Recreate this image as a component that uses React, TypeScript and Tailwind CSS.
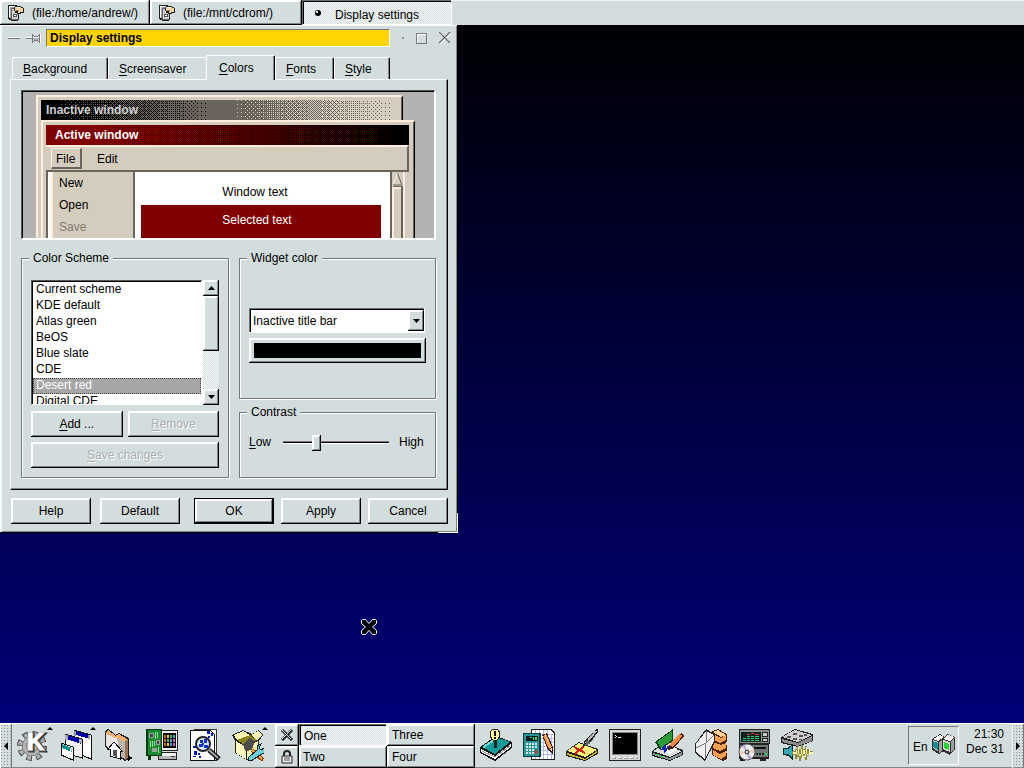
import React, { useState } from "react";
import clsx from "clsx";

const raised =
  "bg-[#d4dddd] shadow-[inset_-1px_-1px_0_#000,inset_1px_1px_0_#fff,inset_-2px_-2px_0_#808686,inset_2px_2px_0_#fff]";
const sunken =
  "shadow-[inset_-1px_-1px_0_#fff,inset_1px_1px_0_#6b7070,inset_2px_2px_0_#000]";
const dither =
  "bg-[repeating-conic-gradient(#f8fbfb_0_25%,#d4dddd_0_50%)] bg-[length:2px_2px]";

const schemes = [
  "Current scheme",
  "KDE default",
  "Atlas green",
  "BeOS",
  "Blue slate",
  "CDE",
  "Desert red",
  "Digital CDE",
];

const tabs = [
  { name: "Background", width: "w-[96px]" },
  { name: "Screensaver", width: "w-[98px]" },
  { name: "Colors", width: "w-[69px]" },
  { name: "Fonts", width: "w-[59px]" },
  { name: "Style", width: "w-[56px]" },
];

// 4x4 ordered dither thresholds
const bayer = [
  [0, 8, 2, 10],
  [12, 4, 14, 6],
  [3, 11, 1, 9],
  [15, 7, 13, 5],
];

const ditherPath = (from: number, to: number, end: number) => {
  let d = "";
  for (let y = 0; y < 20; y++) {
    for (let x = from; x < to; x++) {
      const level = (x - from) / (to - from);
      if (level * 16 > bayer[y % 4][x % 4] + 0.5) {
        d += `M${x} ${y}h1v1h-1z`;
      }
    }
  }
  return `${d}M${to} 0H${end}V20H${to}z`;
};

const inactiveDither = [ditherPath(15, 170, 363), ditherPath(190, 355, 363)];
const activeDither = [ditherPath(50, 220, 363), ditherPath(220, 355, 363)];

interface DitherProps {
  paths: string[];
  base: string;
  colors: string[];
}

const DitherBar: React.FC<DitherProps> = ({ paths, base, colors }) => (
  <svg
    viewBox="0 0 363 20"
    preserveAspectRatio="xMinYMin slice"
    className="absolute inset-0 h-5 w-full"
    shapeRendering="crispEdges"
    aria-hidden="true"
  >
    <path d="M0 0h363v20H0z" fill={base} />
    {paths.map((d, i) => (
      <path key={colors[i]} d={d} fill={colors[i]} />
    ))}
  </svg>
);

interface IconProps {
  children: React.ReactNode;
  size?: string;
  box?: string;
}

const Icon: React.FC<IconProps> = ({
  children,
  size = "size-8",
  box = "0 0 32 32",
}) => (
  <svg
    viewBox={box}
    className={clsx("shrink-0", size)}
    shapeRendering="crispEdges"
    aria-hidden="true"
  >
    {children}
  </svg>
);

const Accel: React.FC<{ text: string }> = ({ text }) => (
  <span>
    <u className="underline-offset-2">{text[0]}</u>
    {text.slice(1)}
  </span>
);

const FolderIcon = () => (
  <Icon size="size-4" box="0 0 16 16">
    <path d="M0 0h9v1h2v14h-1v1H3v-1H1v-1H0z" fill="#222" />
    <path d="M1 1h7v12H1z" fill="#a8a8a8" />
    <path d="M1 1h7v1H1zM1 1h1v11H1z" fill="#fff" />
    <path d="M3 3h7v12H3z" fill="#666" />
    <path d="M4 4h6v10H4z" fill="#d0d0d0" />
    <path d="M5 9h4v3H5z" fill="#555" />
    <path d="M6 10h2v1H6z" fill="#fff" />
    <path d="M6 2h1V1h6v1h2v1h1v5h-3v1H9V8H7V6H6z" fill="#222" />
    <path d="M7 2h6v1h2v4h-3v1h-2V6H7z" fill="#f2cf9c" />
    <path d="M7 2h5v1H7zM9 4h3v1H9z" fill="#fff0d4" />
    <path d="M8 5h3v1H8z" fill="#9a7040" />
  </Icon>
);

const KIcon = () => (
  <Icon>
    <g shapeRendering="auto">
      <circle cx="15" cy="17" r="12.500" fill="none" stroke="#444" strokeWidth="5" strokeDasharray="5.500 4.317" />
      <circle cx="15" cy="17" r="10" fill="#444" />
      <circle cx="15" cy="17" r="12" fill="none" stroke="#b0b0b0" strokeWidth="4" strokeDasharray="3.700 5.725" strokeDashoffset="-.9" />
      <circle cx="15" cy="17" r="7.500" fill="#f4c690" stroke="#b4b4b4" strokeWidth="4" />
      <circle cx="15" cy="17" r="5.500" fill="none" stroke="#777" strokeWidth="1" />
      <text x="11" y="22" fontSize="24" fontWeight="bold" fill="#444" stroke="#444" strokeWidth="3">
        K
      </text>
      <text x="10" y="21" fontSize="24" fontWeight="bold" fill="#fff" stroke="#fff" strokeWidth="1">
        K
      </text>
    </g>
  </Icon>
);

const WindowsIcon = () => (
  <Icon>
    <path d="M14 1l17 5v24l-17-7z" fill="#fff" stroke="#111" />
    <path d="M16 2l14 4v4l-14-4z" fill="#0000a8" />
    <path d="M14 2h2v5h-2zM28 6h2v4h-2z" fill="#999" />
    <path d="M5 5l17 5v19L5 24z" fill="#f3f3f3" stroke="#111" />
    <path d="M7 6l14 4v5L7 10z" fill="#0000a8" />
    <path d="M5 6h3v5H5zM19 10h3v4h-3z" fill="#aaa" />
    <path d="M1 14l12 4v13L1 26z" fill="#fff" stroke="#111" />
    <path d="M2 15l10 4v4L2 19z" fill="#109090" />
    <path d="M10 19h2v3h-2z" fill="#ccc" />
  </Icon>
);

const HomeIcon = () => (
  <Icon>
    <path d="M2 2l3-2 5 3 2 3 4-2 10 5v21l-4 2L2 18z" fill="#222" />
    <path d="M3 3l2-2 4 3 3 3 4-2 8 5v19L3 17z" fill="#f0b070" />
    <path d="M3 5l19 8v17L3 17z" fill="#e9e6e2" />
    <path d="M14 9l8 4v17l-5-3z" fill="#b9b4ae" />
    <path d="M22 12l3-3v20l-3 2z" fill="#9a7450" />
    <path d="M5 20l6-7 8 9h-2v8l-10-3v-7z" fill="#fff" stroke="#111" />
    <path d="M10 21h4v7l-4-1z" fill="#555" />
    <path d="M25 26l5 3-5 3z" fill="#000" />
  </Icon>
);

const HardwareIcon = () => (
  <Icon>
    <path d="M15 1h17v21H15z" fill="#222" />
    <path d="M16 2h15v19H16z" fill="#eee" />
    <path d="M17 4h13v15H17z" fill="#000" />
    <path d="M18 6h2v3h-2zM18 10h2v3h-2zM18 14h2v3h-2z" fill="#e06020" />
    <path d="M21 6h2v3h-2zM21 14h2v3h-2z" fill="#f0d020" />
    <path d="M24 6h2v3h-2zM21 10h2v3h-2z" fill="#40c040" />
    <path d="M24 10h2v3h-2zM24 14h2v3h-2zM27 6h2v3h-2z" fill="#30b0d0" />
    <path d="M27 10h2v3h-2zM27 14h2v3h-2z" fill="#d060d0" />
    <path d="M12 23h19v8H12z" fill="#222" />
    <path d="M13 24h17v3H13z" fill="#eee" />
    <path d="M13 27h17v3H13z" fill="#b5b5b5" />
    <path d="M25 27h4v1h-4z" fill="#333" />
    <path d="M0 0h16v27H5v4H2v-4H0z" fill="#073b15" />
    <path d="M2 1h13v25H2z" fill="#1a8a32" />
    <path d="M3 4h5v5H3zM10 11h4v5h-4zM6 19h5v4H6z" fill="#9ba39b" />
    <path d="M4 5h3v3H4zM11 12h2v3h-2z" fill="#444" />
    <path d="M9 3h1v7H9zM11 3h1v6h-1zM4 12h1v6H4zM6 12h1v6H6zM12 18h1v6h-1zM8 12h1v5H8z" fill="#8fe09a" />
  </Icon>
);

const FindIcon = () => (
  <Icon>
    <path d="M5 0h22v31H5z" fill="#fff" stroke="#333" />
    <path d="M1 1h20l4 4v26H1z" fill="#fff" stroke="#111" />
    <path d="M18 2h3v3h-3zM22 4h2v3h-2zM19 7h2v2h-2zM4 17h3v2H4zM5 22h3v4H5zM9 24h2v2H9zM10 27h2v2h-2zM4 27h3v1H4z" fill="#0018c8" />
    <g shapeRendering="auto">
      <path d="M20 21l10 9" stroke="#111" strokeWidth="5" />
      <path d="M20 21l9 8" stroke="#aaa" strokeWidth="2" />
      <circle cx="14" cy="15" r="7" fill="#dbeaff" stroke="#222" strokeWidth="2" />
    </g>
    <path d="M11 11h3v3h-3zM15 10h3v4h-3zM10 15h4v3h-4zM15 16h4v3h-4zM13 14h2v2h-2z" fill="#1030d0" />
  </Icon>
);

const ToolboxIcon = () => (
  <Icon>
    <path d="M0 6l11-5 9 4 7-4 4 5-4 6v11l-12 8L3 24V12z" fill="#222" />
    <path d="M2 6l9-4 7 4-13 5z" fill="#f7f3b0" />
    <path d="M19 6l7-4 4 4-5 5z" fill="#f7f3b0" />
    <path d="M5 11l13-5 7 5-11 6z" fill="#8c8420" />
    <path d="M4 12l10 6v12L4 24z" fill="#fbf8bd" />
    <path d="M15 18l11-6v11l-11 7z" fill="#f2eca4" />
    <path d="M11 15l7-6 5 3-3 9-7 1z" fill="#4c4c4c" />
    <path d="M20 21l11 10" stroke="#8a3a00" strokeWidth="4" />
    <path d="M20 21l10 9" stroke="#f4a040" strokeWidth="2" />
    <path d="M29 15l-2 4 2 2 3-2v5l-4 2-9 6-3-1 1-3 8-7v-4z" fill="#6fd0dc" stroke="#123" />
  </Icon>
);

const HelpIcon = () => (
  <Icon>
    <path d="M0 18L16 7l16 6v6L15 32 0 24z" fill="#111" />
    <path d="M1 20l14 7 16-12v3L15 30 1 23z" fill="#fff" />
    <path d="M2 22l13 6 15-11" stroke="#999" fill="none" />
    <path d="M2 18L16 8l14 5-15 12z" fill="#109a98" />
    <path d="M2 18L16 8l2 1L4 19z" fill="#6fdcd8" />
    <path d="M14 12h3v7h-3z" fill="#222" />
    <path d="M12 0h6l2 3v5l-3 4h-4l-3-4V3z" fill="#222" />
    <path d="M12 1h6l1 3v3l-2 4h-4l-2-4V4z" fill="#fff69c" />
    <path d="M14 2h2v5h-2zM14 8h2v2h-2z" fill="#111" />
  </Icon>
);

const CalcIcon = () => (
  <Icon>
    <path d="M8 0h20l4 4v27H8z" fill="#222" />
    <path d="M9 1h19l3 4v25H9z" fill="#fff" />
    <path d="M12 1h1v29h-1zM16 1h1v29h-1zM20 1h1v29h-1zM24 1h1v29h-1zM28 5h1v25h-1zM9 5h22v1H9zM9 9h22v1H9zM9 13h22v1H9zM9 17h22v1H9zM9 21h22v1H9zM9 25h22v1H9z" fill="#b4b4ee" />
    <path d="M0 4h18v24H0z" fill="#053c40" />
    <path d="M1 5h15v22H1z" fill="#2a9698" />
    <path d="M3 7h12v5H3z" fill="#061616" />
    <path d="M7 8h2v1H7zM10 8h1v3h-1zM12 8h2v3h-2z" fill="#40e070" />
    <path d="M3 14h2v2H3zM6 14h2v2H6zM9 14h2v2H9zM12 14h2v2h-2zM3 17h2v2H3zM6 17h2v2H6zM9 17h2v2H9zM12 17h2v2h-2zM3 20h2v2H3zM6 20h2v2H6zM9 20h2v2H9zM3 23h2v2H3zM6 23h2v2H6zM9 23h2v2H9z" fill="#d8e8e8" />
    <path d="M12 21h2v4h-2z" fill="#e03020" />
    <path d="M19 6l5-2 6 14v7l-5-4z" fill="#401800" />
    <path d="M20 7l3-2 6 13-3 2z" fill="#f08c38" />
    <path d="M22 6l6 13" stroke="#ffd090" />
    <path d="M26 20l3-1v3z" fill="#f6dcb4" />
  </Icon>
);

const NotesIcon = () => (
  <Icon>
    <path d="M0 22l13-9 19 7v5L19 32 0 27z" fill="#222" />
    <path d="M1 24l18 6 12-8v2l-12 7-18-5z" fill="#c8bc30" />
    <path d="M1 22l12-8 18 7-12 7z" fill="#fbf37a" />
    <path d="M8 18l11 6M18 17l-9 8" stroke="#e01818" strokeWidth="2" />
    <path d="M30 0h2v3l-8 11-7 4 1-6z" fill="#222" />
    <path d="M30 2L20 14" stroke="#bbb" strokeWidth="2" />
    <path d="M21 11l4 3-6 3z" fill="#666" />
  </Icon>
);

const TerminalIcon = () => (
  <Icon>
    <path d="M0 0h32v32H0z" fill="#222" />
    <path d="M1 1h30v30H1z" fill="#d8d8d8" />
    <path d="M3 3h26v23H3z" fill="#888" />
    <path d="M4 4h24v21H4z" fill="#000" />
    <path d="M6 6h1v1H6zM7 7h1v1H7zM6 8h1v1H6zM9 8h3v1H9z" fill="#fff" />
    <path d="M3 28h4v2H3zM9 28h4v2H9zM15 28h4v2h-4zM21 28h4v2h-4zM27 28h2v2h-2z" fill="#999" />
    <path d="M3 28h3v1H3zM9 28h3v1H9zM15 28h3v1h-3zM21 28h3v1h-3zM27 28h1v1h-1z" fill="#fff" />
  </Icon>
);

const ScannerIcon = () => (
  <Icon>
    <path d="M0 22l8-6 8-1 15 6v5L18 32 0 27z" fill="#222" />
    <path d="M1 22l9-5 20 5-12 6z" fill="#ddd" />
    <path d="M1 24l17 5 12-6v3l-12 5-17-5z" fill="#8a9494" />
    <path d="M3 13L21 0v12L8 21z" fill="#0d3a12" />
    <path d="M5 13L20 2v9L9 19z" fill="#2c9c38" />
    <path d="M8 20l9-5 9 5-8 5z" fill="#fff" />
    <path d="M10 21l3-4v5l4-5" stroke="#1020c0" fill="none" strokeWidth="2" />
    <path d="M29 4l3 3-10 12-6 2 2-6z" fill="#4a1c00" />
    <path d="M29 6L19 17" stroke="#f08c40" strokeWidth="4" />
    <path d="M4 25h3v1H4zM9 27h3v1H9z" fill="#30e040" />
  </Icon>
);

const MailIcon = () => (
  <Icon>
    <path d="M17 2l6-2 9 5v7l-2 2 2 3v4l-2 2 2 2v5l-4 2-11-6V9z" fill="#4a2000" />
    <path d="M18 3l5-2 8 5-5 2z" fill="#ffd6a0" />
    <path d="M18 5l8 4 5-3v5l-6 3-6-3zM19 13l7 3 5-2v5l-6 3-7-3zM18 21l7 4 6-3v5l-5 3-8-4z" fill="#f6a050" />
    <path d="M0 15L11 0l9 5v8L10 32 0 24z" fill="#222" />
    <path d="M1 15L11 2l8 4v6L10 30 1 23z" fill="#f1f1f1" />
    <path d="M11 2v12l8-8M11 14L1 19M11 14l-1 15" stroke="#777" fill="none" />
  </Icon>
);

const PlayerIcon = () => (
  <Icon>
    <path d="M1 0h31v15h-1v15H1z" fill="#222" />
    <path d="M2 1h29v13H2z" fill="#8a9292" />
    <path d="M3 3h20v10H3z" fill="#0b2220" />
    <path d="M5 9h3v1H5zM9 9h3v1H9zM13 9h3v1h-3zM17 9h4v1h-4zM5 11h3v1H5zM9 11h3v1H9zM13 11h3v1h-3zM17 11h4v1h-4zM9 7h3v1H9zM13 7h3v1h-3zM17 7h4v1h-4z" fill="#20d070" />
    <path d="M9 5h3v1H9zM13 4h3v1h-3zM17 5h4v1h-4z" fill="#e04030" />
    <path d="M24 3h6v5h-6zM24 9h6v4h-6z" fill="#222" />
    <path d="M25 4h4v3h-4zM25 10h4v2h-4z" fill="#ccc" />
    <path d="M2 16h28v12H2z" fill="#707878" />
    <path d="M14 18h14v2H14z" fill="#111" />
    <path d="M18 24h2v2h-2zM21 24h2v2h-2zM24 24h2v2h-2z" fill="#222" />
    <path d="M27 24h2v2h-2z" fill="#20e030" />
    <path d="M2 30h5v2H2zM22 30h6v2h-6z" fill="#222" />
    <g shapeRendering="auto">
      <circle cx="9" cy="23" r="8" fill="#ececec" stroke="#555" />
      <path d="M9 23L4 17l3-1.500zM9 23l5 6-4 1.500z" fill="#b8a8d8" />
      <path d="M9 23l7-3v4zM9 23l-7 3v-4z" fill="#f0c8c0" />
      <circle cx="9" cy="23" r="2.500" fill="#555" />
      <circle cx="9" cy="23" r="1" fill="#fff" />
    </g>
  </Icon>
);

const MixerIcon = () => (
  <Icon>
    <path d="M0 8L14 0l18 5v7L17 18 0 14z" fill="#222" />
    <path d="M1 8l13-7 17 5-14 7z" fill="#cfcfcf" />
    <path d="M1 10l16 4 14-7v5l-14 5-16-4z" fill="#8c8c8c" />
    <path d="M6 7h4v2H6zM12 4h4v2h-4zM12 9h4v2h-4zM18 6h4v2h-4zM23 5h3v2h-3zM18 10h3v1h-3z" fill="#555" />
    <path d="M2 19h4l6-4v16l-5-4-5-1z" fill="#062c34" />
    <path d="M3 20h4l4-3v12l-4-4H3z" fill="#36a8b4" />
    <path d="M11 22h3v-2h2v-3h2v3h2v-4h2v4h2v-3h2v3h2v2h4v3h-4v2h-2v4h-2v-4h-2v2h-2v3h-2v-4h-2v2h-2v-4h-3z" fill="#8d8840" />
    <path d="M12 23h3v-2h1v5h1v-8h1v9h2v-7h1v10h1v-9h2v7h1v-10h1v8h2v-5h1v2h3v2H12z" fill="#fdf8b0" />
  </Icon>
);

const NetworkIcon = () => (
  <Icon size="size-6" box="0 0 24 24">
    <path d="M0 6l8-5 5 3v13l-6 4-7-4z" fill="#333" />
    <path d="M1 6l7-4 4 2-6 4z" fill="#f4f4f4" />
    <path d="M1 7l5 2v9l-5-3z" fill="#d6d6d6" />
    <path d="M1 8l5 2v7l-5-3z" fill="#109090" />
    <path d="M7 9l5-4v11l-5 4z" fill="#a0a0a0" />
    <path d="M10 6l6-5 7 3v12l-5 6-8-4z" fill="#333" />
    <path d="M11 6l5-4 6 2-4 4z" fill="#f4f4f4" />
    <path d="M11 7l7 2v10l-7-3z" fill="#d6d6d6" />
    <path d="M12 9l5 2v6l-5-2z" fill="#20d828" />
    <path d="M19 9l3-4v11l-3 4z" fill="#a0a0a0" />
  </Icon>
);

const launchersLeft = [
  { name: "K menu", icon: <KIcon />, menu: true },
  { name: "Window list", icon: <WindowsIcon />, menu: true },
  { name: "Home", icon: <HomeIcon />, menu: false },
  { name: "Control center", icon: <HardwareIcon />, menu: false },
  { name: "Find files", icon: <FindIcon />, menu: false },
  { name: "Utilities", icon: <ToolboxIcon />, menu: true },
];

const launchersRight = [
  { name: "Help", icon: <HelpIcon />, menu: false },
  { name: "Calculator", icon: <CalcIcon />, menu: false },
  { name: "Notes", icon: <NotesIcon />, menu: false },
  { name: "Terminal", icon: <TerminalIcon />, menu: false },
  { name: "Organizer", icon: <ScannerIcon />, menu: false },
  { name: "Mail", icon: <MailIcon />, menu: false },
  { name: "CD player", icon: <PlayerIcon />, menu: false },
  { name: "Mixer", icon: <MixerIcon />, menu: false },
];

interface LauncherProps {
  name: string;
  icon: React.ReactNode;
  menu: boolean;
}

const Launcher: React.FC<LauncherProps> = ({ name, icon, menu }) => (
  <button
    aria-label={name}
    className="relative flex w-[43px] items-center justify-center pb-[2px] pr-[2px]"
  >
    {icon}
    {menu && (
      <svg
        viewBox="0 0 6 3"
        className="absolute right-[2px] top-[3px] h-[3px] w-[6px]"
        aria-hidden="true"
      >
        <path d="M0 3l3-3 3 3z" />
      </svg>
    )}
  </button>
);

const Taskbar = () => (
  <header className="flex h-[25px] bg-[#d4dddd] shadow-[inset_0_1px_0_#eef2f2]">
    <button className={clsx(raised, "flex w-[150px] items-center gap-2 pl-2")}>
      <FolderIcon />
      (file:/home/andrew/)
    </button>
    <button className={clsx(raised, "flex w-[152px] items-center gap-2 pl-[9px]")}>
      <FolderIcon />
      (file:/mnt/cdrom/)
    </button>
    <button
      className={clsx(
        dither,
        sunken,
        "flex w-[150px] items-center gap-[14px] pl-[13px] pt-1"
      )}
    >
      <svg viewBox="0 0 6 6" className="-mt-1 size-[6px]" aria-hidden="true">
        <circle cx="3" cy="3" r="3" />
        <path d="M1 1h2v2H1z" fill="#fff" />
      </svg>
      Display settings
    </button>
  </header>
);

const TitleBar = () => (
  <div className="flex h-[22px] items-end pl-2 pr-[7px] pt-1">
    <div className="flex h-[18px] w-[38px] items-center gap-[6px]">
      <button aria-label="Minimize" className="h-[2px] w-3 border-b border-t border-b-[#777] border-t-white" />
      <button aria-label="Sticky">
        <svg viewBox="0 0 15 10" className="h-[10px] w-[15px]" shapeRendering="crispEdges" aria-hidden="true">
          <path d="M0 5h6v1H0zM6 1h1v9H6zM7 2h1v1H7zM8 3h4v1H8zM12 2h1v1h-1zM13 1h1v9h-1zM7 8h1v1H7zM8 7h4v1H8zM12 8h1v1h-1z" fill="#777" />
          <path d="M0 4h6v1H0zM7 4h6v1H7zM14 1h1v9h-1z" fill="#fff" />
          <path d="M7 5h6v2H7z" fill="#a9b0b0" />
        </svg>
      </button>
    </div>
    <h1 className="h-[18px] flex-1 border border-b-white border-l-[#777] border-r-white border-t-[#777] bg-[#ffd400] pl-[3px] font-bold leading-4">
      Display settings
    </h1>
    <div className="flex h-[18px] w-[61px] items-center justify-end gap-3">
      <button aria-label="Menu" className="size-[2px] bg-[#8d9393]" />
      <button
        aria-label="Maximize"
        className="size-[11px] border border-[#777] shadow-[inset_1px_1px_0_#fff]"
      />
      <button aria-label="Close">
        <svg viewBox="0 0 12 12" className="size-3" aria-hidden="true">
          <path d="M1 2l11 10M12 2L1 12" stroke="#fff" />
          <path d="M0 0l11 11M11 0L0 11" stroke="#666" strokeWidth="1.200" />
        </svg>
      </button>
    </div>
  </div>
);

const Preview = () => (
  <div className="h-[150px] border border-b-2 border-r-2 border-b-white border-l-[#555] border-r-white border-t-[#555]">
    <div className="relative h-[147px] overflow-hidden border-l border-t border-black bg-[#b2b2b2] pt-[3px]">
      <div className="ml-[13px] h-full w-[367px] border-l-2 border-r border-t-2 border-l-[#ffeedd] border-r-black border-t-[#ffeedd] bg-[#d4ccbc] pl-[3px] pt-[3px] shadow-[inset_-1px_0_0_#6b645c]">
        <div className="relative mr-[1px] h-5 overflow-hidden pl-[5px] font-bold leading-5 text-[#d0d0d0]">
          <DitherBar paths={inactiveDither} base="#000" colors={["#6b645c", "#d4ccbc"]} />
          <span className="relative">Inactive window</span>
        </div>
      </div>
      <div className="absolute bottom-0 left-[18px] top-[28px] w-[374px] border-l-2 border-r border-t-2 border-l-[#ffeedd] border-r-black border-t-[#ffeedd] bg-[#d4ccbc] pl-[3px] pr-[5px] pt-[3px] shadow-[inset_-1px_0_0_#6b645c]">
        <div className="relative h-5 overflow-hidden pl-[9px] font-bold leading-5 text-white">
          <DitherBar paths={activeDither} base="#800000" colors={["#400000", "#000"]} />
          <span className="relative">Active window</span>
        </div>
        <div className="flex h-[27px] items-center border-b-2 border-r-2 border-t-2 border-b-[#6b645c] border-r-[#6b645c] border-t-[#ffeedd] pl-[5px]">
          <span className="h-[21px] w-[31px] border-b-2 border-l border-r-2 border-t border-b-[#6b645c] border-l-[#ffeedd] border-r-[#6b645c] border-t-[#ffeedd] pl-1 leading-5">
            File
          </span>
          <span className="pl-[15px]">Edit</span>
        </div>
        <div className="flex h-[66px] pr-1">
          <div className="w-[89px] border-l-2 border-l-[#6b645c] bg-white pl-[3px]">
            <ul className="h-full border-l-2 border-r-2 border-l-[#ffeedd] border-r-[#6b645c] bg-[#d4ccbc] pl-[6px] leading-[22px]">
              <li>New</li>
              <li>Open</li>
              <li className="text-[#807a72]">Save</li>
            </ul>
          </div>
          <div className="flex-1 bg-white pl-[6px] pr-[9px] text-center">
            <div className="h-[33px] pr-3 pt-2 leading-6">Window text</div>
            <div className="h-9 bg-[#800000] pr-2 leading-[30px] text-white">
              Selected text
            </div>
          </div>
          <div className="w-[15px] border-l-2 border-r-2 border-l-[#6b645c] border-r-[#ffeedd]">
            <svg viewBox="0 0 11 14" className="block h-[14px] w-[11px]" aria-hidden="true">
              <path d="M5.500 1L1 13h9z" fill="#d4ccbc" />
              <path d="M5.500 1L1 13" stroke="#ffeedd" />
              <path d="M5.500 1L10 13H1" stroke="#6b645c" fill="none" />
            </svg>
            <div className="h-14 border-l-2 border-r-2 border-t border-l-[#ffeedd] border-r-[#6b645c] border-t-[#6b645c] shadow-[inset_0_2px_0_#ffeedd]" />
          </div>
        </div>
      </div>
    </div>
  </div>
);

interface GroupProps {
  title: string;
  className?: string;
  children: React.ReactNode;
}

const Group: React.FC<GroupProps> = ({ title, className, children }) => (
  <fieldset
    className={clsx(
      "min-w-0 border border-[#747a7a] px-[9px] shadow-[1px_1px_0_#fff,inset_1px_1px_0_#fff]",
      className
    )}
  >
    <legend className="-ml-[2px] h-4 bg-[#d4dddd] px-1 leading-4">
      {title}
    </legend>
    {children}
  </fieldset>
);

const ArrowButton: React.FC<{ down?: boolean }> = ({ down = false }) => (
  <button
    aria-label={down ? "Scroll down" : "Scroll up"}
    className={clsx(raised, "flex h-4 items-center justify-center")}
  >
    <svg viewBox="0 0 7 4" className="h-1 w-[7px]" aria-hidden="true">
      <path d={down ? "M0 0h7L3.500 4z" : "M0 4h7L3.500 0z"} />
    </svg>
  </button>
);

const SchemeGroup = () => (
  <Group title="Color Scheme" className="w-[208px] pb-[9px]">
    <div className="mt-[14px] flex h-[125px]">
      <div className="w-[172px] border-b border-l border-r-2 border-t border-b-white border-l-[#555] border-r-white border-t-[#555]">
        <select
          size={8}
          defaultValue="Desert red"
          aria-label="Color Scheme"
          className="block h-[123px] w-full overflow-hidden border-l border-t border-black bg-white outline-none [scrollbar-width:none]"
        >
          {schemes.map((scheme) => (
            <option
              key={scheme}
              value={scheme}
              className="h-4 min-h-0 px-[3px] py-0 leading-[18px] checked:bg-[linear-gradient(#a6a6a6,#a6a6a6)] checked:text-white checked:outline-1 checked:-outline-offset-1 checked:outline-dotted checked:outline-[#444]"
            >
              {scheme}
            </option>
          ))}
        </select>
      </div>
      <div className={clsx(dither, "flex w-4 flex-col")}>
        <ArrowButton />
        <div className={clsx(raised, "h-[55px]")} />
        <div className="flex-1" />
        <ArrowButton down />
      </div>
    </div>
    <div className="mt-[6px] grid grid-cols-2 gap-[5px]">
      <button className={clsx(raised, "h-[26px]")}>
        <Accel text="Add ..." />
      </button>
      <button
        disabled
        className={clsx(raised, "h-[26px] text-[#a9afaf] [text-shadow:1px_1px_0_#fff]")}
      >
        <Accel text="Remove" />
      </button>
      <button
        disabled
        className={clsx(raised, "col-span-2 h-[26px] text-[#a9afaf] [text-shadow:1px_1px_0_#fff]")}
      >
        <Accel text="Save changes" />
      </button>
    </div>
  </Group>
);

const WidgetGroup = () => (
  <Group title="Widget color" className="h-[149px]">
    <div className="relative mt-[42px]">
      <select
        aria-label="Widget color"
        className={clsx(sunken, "block h-[25px] w-[176px] appearance-none bg-white pl-1")}
      >
        <option>Inactive title bar</option>
        <option>Active title bar</option>
      </select>
      <span
        className={clsx(
          raised,
          "pointer-events-none absolute left-[159px] top-[2px] flex h-[21px] w-4 items-center justify-center"
        )}
      >
        <svg viewBox="0 0 7 4" className="h-1 w-[7px]" aria-hidden="true">
          <path d="M0 0h7L3.500 4z" />
        </svg>
      </span>
    </div>
    <button
      aria-label="Pick color"
      className={clsx(raised, "mt-[5px] block h-[25px] w-[177px] p-[5px]")}
    >
      <span className="block h-full bg-black" />
    </button>
  </Group>
);

const ContrastGroup = () => {
  const [contrast, setContrast] = useState<number>(3);

  return (
    <Group title="Contrast" className="h-[74px]">
      <div className="mt-[14px] flex h-4 items-center">
        <label htmlFor="contrast" className="w-[34px]">
          <Accel text="Low" />
        </label>
        <input
          id="contrast"
          type="range"
          min={0}
          max={10}
          value={contrast}
          onChange={(e) => setContrast(Number(e.target.value))}
          className="h-4 w-[106px] appearance-none bg-transparent [&::-webkit-slider-runnable-track]:h-[3px] [&::-webkit-slider-runnable-track]:bg-[linear-gradient(#777_1px,#000_1px,#000_2px,#fff_2px)] [&::-webkit-slider-thumb]:-mt-[6px] [&::-webkit-slider-thumb]:h-4 [&::-webkit-slider-thumb]:w-[9px] [&::-webkit-slider-thumb]:appearance-none [&::-webkit-slider-thumb]:bg-[#d4dddd] [&::-webkit-slider-thumb]:shadow-[inset_-1px_-1px_0_#000,inset_1px_1px_0_#fff,inset_-2px_-2px_0_#808686,inset_2px_2px_0_#fff]"
        />
        <span className="pl-[10px]">High</span>
      </div>
    </Group>
  );
};

const SettingsDialog = () => {
  const [activeTab, setActiveTab] = useState<string>("Colors");

  return (
    <section
      aria-label="Display settings"
      className="relative w-[458px] bg-[#d4dddd] pb-[9px] shadow-[inset_-1px_-1px_0_#000,inset_2px_1px_0_#f6f9f9,inset_-2px_-2px_0_#808686]"
    >
      <TitleBar />
      <div role="tablist" className="mt-2 flex h-6 items-end pl-3">
        {tabs.map((tab) => (
          <button
            key={tab.name}
            role="tab"
            aria-selected={tab.name === activeTab}
            onClick={() => setActiveTab(tab.name)}
            className={clsx(
              tab.width,
              "rounded-t-[2px] border-l border-t border-l-white border-t-white bg-[#d4dddd] text-left",
              tab.name === activeTab
                ? "z-10 -mb-px h-[25px] pb-px pl-3"
                : "h-[22px] pl-[10px] pt-px",
              tab.name !== "Screensaver" &&
                "border-r border-r-black shadow-[inset_-1px_0_0_#808686]"
            )}
          >
            <Accel text={tab.name} />
          </button>
        ))}
      </div>
      <div className="mx-[10px] border border-b-black border-l-white border-r-black border-t-white pb-[11px] pl-[10px] pr-[11px] pt-[10px] shadow-[inset_-1px_-1px_0_#808686]">
        <Preview />
        <div className="mt-[10px] flex gap-[10px]">
          <SchemeGroup />
          <div className="flex flex-1 flex-col gap-[5px]">
            <WidgetGroup />
            <ContrastGroup />
          </div>
        </div>
      </div>
      <div className="mt-2 flex gap-[7px] pl-[11px] pr-[10px]">
        <button className={clsx(raised, "h-[26px] w-20")}>Help</button>
        <button className={clsx(raised, "ml-[2px] h-[26px] w-20")}>Default</button>
        <button className="ml-[7px] h-[26px] w-20 border border-black bg-[#d4dddd] shadow-[inset_-1px_-1px_0_#000,inset_1px_1px_0_#fff,inset_-2px_-2px_0_#808686,inset_2px_2px_0_#fff]">
          OK
        </button>
        <button className={clsx(raised, "h-[26px] w-20")}>Apply</button>
        <button className={clsx(raised, "h-[26px] w-20")}>Cancel</button>
      </div>
      <span className="absolute bottom-0 right-0 h-5 w-5 border-b border-r border-white" />
    </section>
  );
};

const Grip: React.FC<{ right?: boolean }> = ({ right = false }) => (
  <button
    aria-label={right ? "Hide panel right" : "Hide panel left"}
    className="flex w-3 items-center justify-center bg-[radial-gradient(#8a9090_1px,transparent_1px)] bg-[length:3px_3px] shadow-[inset_-1px_0_0_#777,inset_1px_1px_0_#fff]"
  >
    <svg viewBox="0 0 4 8" className="h-2 w-1" aria-hidden="true">
      <path d={right ? "M0 0v8l4-4z" : "M4 0v8L0 4z"} />
    </svg>
  </button>
);

const Panel = () => (
  <footer className="flex h-[45px] border-t border-t-white bg-[#d4dddd] shadow-[inset_0_-1px_0_#808686]">
    <Grip />
    <nav className="flex">
      {launchersLeft.map((item) => (
        <Launcher key={item.name} {...item} />
      ))}
    </nav>
    <div className="ml-[5px] grid w-6 grid-rows-2">
      <button aria-label="Log out" className={clsx(raised, "flex items-center justify-center")}>
        <svg viewBox="0 0 14 12" className="h-3 w-[14px]" aria-hidden="true">
          <path d="M2 1l10 10M12 1L2 11" stroke="#222" strokeWidth="3" />
          <path d="M2 1l9 9M11 1l-9 9" stroke="#ddd" />
        </svg>
      </button>
      <button aria-label="Lock screen" className={clsx(raised, "flex items-center justify-center")}>
        <svg viewBox="0 0 12 14" className="h-[14px] w-3" aria-hidden="true">
          <path d="M3 7V4a3 3 0 0 1 6 0v3" fill="none" stroke="#222" strokeWidth="2" />
          <path d="M1 6h10v7H1z" fill="#eee" stroke="#222" />
          <path d="M3 8h6M3 10h6" stroke="#555" />
        </svg>
      </button>
    </div>
    <div className="grid w-[176px] grid-cols-2 grid-rows-2 text-left">
      <button className={clsx(dither, sunken, "pl-[5px] pt-[2px] text-left")}>One</button>
      <button className={clsx(raised, "pl-[5px] text-left")}>Three</button>
      <button className={clsx(raised, "pl-1 text-left")}>Two</button>
      <button className={clsx(raised, "pl-[5px] text-left")}>Four</button>
    </div>
    <nav className="flex">
      {launchersRight.map((item) => (
        <Launcher key={item.name} {...item} />
      ))}
    </nav>
    <div className="ml-auto mt-[2px] flex h-[39px] w-[51px] items-center gap-1 border border-b-white border-l-[#777] border-r-white border-t-[#777] pb-[2px] pl-1">
      <span className="pt-1">En</span>
      <NetworkIcon />
    </div>
    <time className="w-[53px] pr-2 pt-[3px] text-right leading-[15px]">
      21:30
      <br />
      Dec 31
    </time>
    <Grip right />
  </footer>
);

export default function App() {
  return (
    <div className="flex min-h-screen flex-col bg-[linear-gradient(#000,#000080)] font-['Liberation_Sans',Arial,sans-serif] text-[12px] leading-4 text-black">
      <Taskbar />
      <main className="relative flex-1">
        <SettingsDialog />
        <svg
          viewBox="0 0 16 16"
          className="absolute left-[361px] top-[594px] size-4"
          aria-hidden="true"
        >
          <path
            d="M.5 1.500l1-1h3L8 4.500l3.500-4h3l1 1v3L11.500 8l4 3.500v3l-1 1h-3L8 11.500l-3.500 4h-3l-1-1v-3L4.500 8l-4-3.500z"
            fill="#000"
            stroke="#fff"
          />
        </svg>
      </main>
      <Panel />
    </div>
  );
}
